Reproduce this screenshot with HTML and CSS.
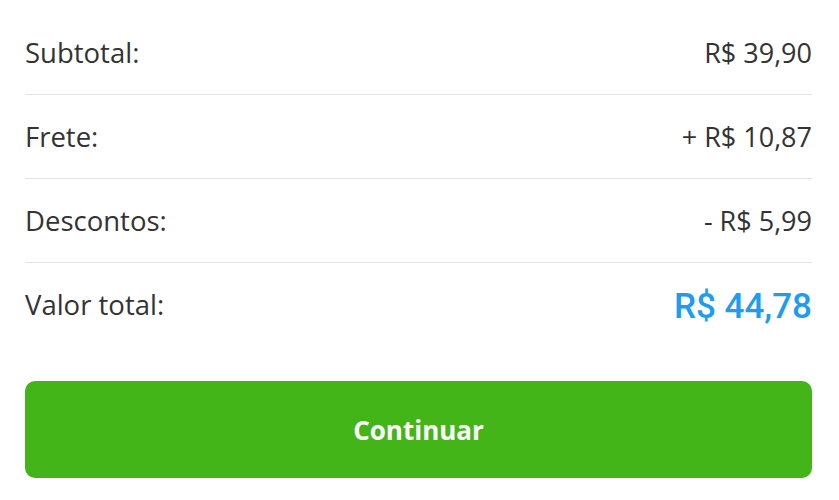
FILE: index.html
```html
<!DOCTYPE html>
<html lang="pt-BR">
<head>
  <meta charset="UTF-8">
  <meta name="viewport" content="width=device-width, initial-scale=1">
  <title>Resumo do pedido</title>
  <link rel="stylesheet" href="styles.css">
</head>
<body>
  <div class="summary">
    <div class="row">
      <span class="label">Subtotal:</span>
      <span class="value">R$ 39,90</span>
    </div>
    <div class="row">
      <span class="label">Frete:</span>
      <span class="value">+ R$ 10,87</span>
    </div>
    <div class="row">
      <span class="label">Descontos:</span>
      <span class="value">- R$ 5,99</span>
    </div>
    <div class="row total">
      <span class="label">Valor total:</span>
      <span class="value">R$ 44,78</span>
    </div>

    <button class="btn-continue">Continuar</button>
  </div>
</body>
</html>
```

FILE: styles.css
```css
body {
  font-family: "Open Sans", "Noto Sans", sans-serif;
  color: #333;
  background: #fff;
  margin: 0;
}

.summary {
  padding: 11px 27px 0 25px;
}

.row {
  display: flex;
  justify-content: space-between;
  align-items: center;
  height: 83px;
  border-bottom: 1px solid #e3e3e3;
  font-size: 27.5px;
}

.row .value {
  font-size: 27px;
}

.row.total {
  border-bottom: none;
}

.row.total .value {
  font-family: Roboto, sans-serif;
  color: #1e9cf4;
  font-size: 35px;
  font-weight: 500;
  padding-top: 4px;
}

.btn-continue {
  display: block;
  width: 100%;
  height: 97px;
  margin-top: 35px;
  background: #44b518;
  color: #fff;
  border: none;
  border-radius: 10px;
  font-family: inherit;
  font-size: 26px;
  font-weight: 700;
  padding-top: 2px;
  cursor: pointer;
}
```
